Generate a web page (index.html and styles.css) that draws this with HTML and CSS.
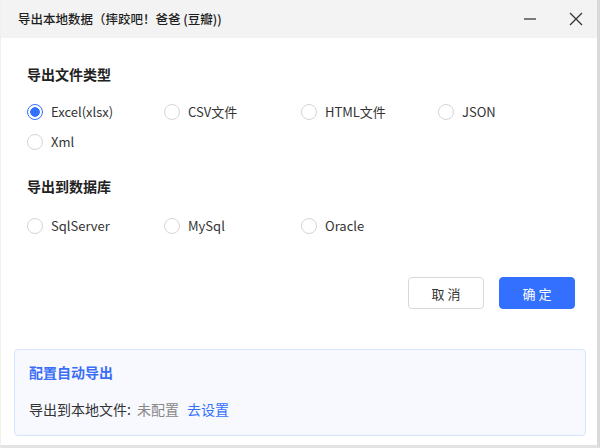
FILE: index.html
```html
<!DOCTYPE html>
<html lang="zh">
<head>
<meta charset="utf-8">
<link rel="stylesheet" href="styles.css">
</head>
<body>
<div class="window">
  <div class="titlebar">
    <div class="title">导出本地数据（摔跤吧！爸爸 (豆瓣))</div>
    <div class="controls">
      <span class="ctl min"><svg width="14" height="14" viewBox="0 0 14 14"><line x1="1" y1="7" x2="13" y2="7" stroke="#7a7a7a" stroke-width="2"/></svg></span>
      <span class="ctl close"><svg width="14" height="14" viewBox="0 0 14 14"><path d="M1 1L13 13M13 1L1 13" stroke="#333" stroke-width="1.3" fill="none"/></svg></span>
    </div>
  </div>
  <div class="content">
    <div class="sec-title first">导出文件类型</div>
    <div class="radios">
      <label class="radio checked"><span class="dot"></span>Excel(xlsx)</label>
      <label class="radio"><span class="dot"></span>CSV文件</label>
      <label class="radio"><span class="dot"></span>HTML文件</label>
      <label class="radio"><span class="dot"></span>JSON</label>
      <label class="radio"><span class="dot"></span>Xml</label>
    </div>
    <div class="sec-title second">导出到数据库</div>
    <div class="radios db">
      <label class="radio"><span class="dot"></span>SqlServer</label>
      <label class="radio"><span class="dot"></span>MySql</label>
      <label class="radio"><span class="dot"></span>Oracle</label>
    </div>
    <div class="actions">
      <button class="btn cancel">取 消</button>
      <button class="btn ok">确 定</button>
    </div>
  </div>
  <div class="panel">
    <div class="panel-title">配置自动导出</div>
    <div class="panel-row">导出到本地文件:<span class="muted">未配置</span><span class="link">去设置</span></div>
  </div>
</div>
</body>
</html>
```
FILE: styles.css
```css
html, body {
  margin: 0;
  padding: 0;
  background: #ffffff;
}
body {
  font-family: "Noto Sans CJK SC", "Noto Sans", sans-serif;
  color: #333;
}
.window {
  width: 600px;
  height: 448px;
  box-sizing: border-box;
  border-right: 3px solid #d9d9d9;
  border-bottom: 3px solid #e3e3e3;
  border-left: 1px solid #f0f0f0;
  display: flex;
  flex-direction: column;
  background: #fff;
}
.titlebar {
  height: 38px;
  flex: none;
  background: #f3f3f3;
  display: flex;
  align-items: center;
  justify-content: space-between;
  padding-left: 17px;
}
.title {
  font-size: 12.5px;
  font-weight: 500;
  color: #1e1e1e;
  line-height: 38px;
}
.controls {
  display: flex;
  align-items: center;
  height: 38px;
}
.ctl {
  display: flex;
  align-items: center;
  justify-content: center;
  width: 14px;
  height: 14px;
}
.min { margin-right: 32px; }
.close { margin-right: 14px; }
.content {
  padding: 0 22px 0 26px;
}
.sec-title {
  font-size: 14px;
  font-weight: 600;
  color: #222;
  line-height: 20px;
}
.sec-title.first { margin-top: 26px; }
.sec-title.second { margin-top: 19px; }
.radios {
  display: grid;
  grid-template-columns: repeat(4, 137px);
  grid-auto-rows: 30px;
  margin-top: 13px;
}
.radios.db { margin-top: 15px; }
.radio {
  display: flex;
  align-items: center;
  font-size: 13px;
  color: #333;
  line-height: 30px;
}
.dot {
  width: 16px;
  height: 16px;
  box-sizing: border-box;
  border: 1px solid #d5d5d5;
  border-radius: 50%;
  margin-right: 8px;
  background: #fff;
  flex: none;
}
.radio.checked .dot {
  border: 1.5px solid #3370ff;
  background: radial-gradient(circle, #3370ff 0 4.5px, #fff 5px);
}
.actions {
  display: flex;
  justify-content: flex-end;
  gap: 15px;
  margin-top: 36px;
}
.btn {
  width: 76px;
  height: 32px;
  box-sizing: border-box;
  border-radius: 4px;
  font-family: "Noto Sans CJK SC", sans-serif;
  font-size: 13px;
  cursor: pointer;
  padding: 0;
}
.cancel {
  background: #fff;
  border: 1px solid #d9d9d9;
  color: #333;
}
.ok {
  background: #3370ff;
  border: 1px solid #3370ff;
  color: #fff;
}
.panel {
  margin: 40px 0 0 13px;
  width: 572px;
  height: 87px;
  box-sizing: border-box;
  background: #f7f9ff;
  border: 1px solid #d6e4ff;
  border-radius: 4px;
  padding: 0 0 0 14px;
}
.panel-title {
  margin-top: 12px;
  line-height: 20px;
  font-size: 14px;
  font-weight: 600;
  color: #3a6ef6;
}
.panel-row {
  margin-top: 17px;
  line-height: 20px;
  font-size: 14px;
  color: #333;
}
.muted {
  color: #888;
  margin-left: 6px;
}
.link {
  color: #3370ff;
  margin-left: 8px;
}
```
